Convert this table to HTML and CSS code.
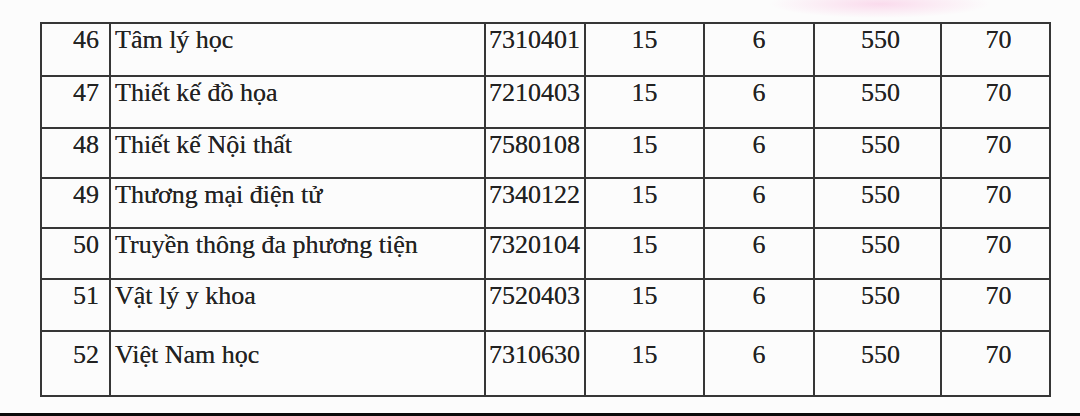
FILE: index.html
```html
<!DOCTYPE html>
<html lang="vi">
<head>
<meta charset="utf-8">
<link rel="stylesheet" href="styles.css">
</head>
<body>
<div class="sheet">
  <table class="grid">
    <colgroup>
      <col class="c-no"><col class="c-name"><col class="c-code"><col class="c-a"><col class="c-b"><col class="c-c"><col class="c-d">
    </colgroup>
    <tbody>
      <tr class="r1"><td class="no">46</td><td class="name">Tâm lý học</td><td class="code">7310401</td><td class="num">15</td><td class="num">6</td><td class="num n550">550</td><td class="num n70">70</td></tr>
      <tr class="r2"><td class="no">47</td><td class="name">Thiết kế đồ họa</td><td class="code">7210403</td><td class="num">15</td><td class="num">6</td><td class="num n550">550</td><td class="num n70">70</td></tr>
      <tr class="r3"><td class="no">48</td><td class="name">Thiết kế Nội thất</td><td class="code">7580108</td><td class="num">15</td><td class="num">6</td><td class="num n550">550</td><td class="num n70">70</td></tr>
      <tr class="r4"><td class="no">49</td><td class="name">Thương mại điện tử</td><td class="code">7340122</td><td class="num">15</td><td class="num">6</td><td class="num n550">550</td><td class="num n70">70</td></tr>
      <tr class="r5"><td class="no">50</td><td class="name">Truyền thông đa phương tiện</td><td class="code">7320104</td><td class="num">15</td><td class="num">6</td><td class="num n550">550</td><td class="num n70">70</td></tr>
      <tr class="r6"><td class="no">51</td><td class="name">Vật lý y khoa</td><td class="code">7520403</td><td class="num">15</td><td class="num">6</td><td class="num n550">550</td><td class="num n70">70</td></tr>
      <tr class="r7 last"><td class="no">52</td><td class="name">Việt Nam học</td><td class="code">7310630</td><td class="num">15</td><td class="num">6</td><td class="num n550">550</td><td class="num n70">70</td></tr>
    </tbody>
  </table>
</div>
<div class="edge"></div>
</body>
</html>
```

FILE: styles.css
```css
html, body {
  margin: 0;
  padding: 0;
}
body {
  width: 1080px;
  height: 416px;
  overflow: hidden;
  background:
    radial-gradient(ellipse 110px 14px at 880px 4px, rgba(250, 215, 235, 0.9), rgba(250, 225, 240, 0) 100%),
    #fcfcfc;
  color: #222222;
}
.sheet {
  padding: 22px 0 0 40px;
}
.grid {
  border-collapse: collapse;
  table-layout: fixed;
  width: 1009px;
  font-family: "Liberation Serif", "DejaVu Serif", serif;
  font-size: 26px;
  line-height: 28px;
  text-shadow: 0 0 0.5px rgba(20, 20, 20, 0.7);
}
.c-no { width: 69px; }
.c-name { width: 375px; }
.c-code { width: 100px; }
.c-a { width: 119px; }
.c-b { width: 110px; }
.c-c { width: 127px; }
.c-d { width: 109px; }
.grid td {
  border: 2px solid #363636;
  vertical-align: top;
  padding: 2px 4px 0;
  white-space: nowrap;
  overflow: hidden;
}
.r1 { height: 53px; }
.r2 { height: 52px; }
.r3 { height: 50px; }
.r4 { height: 50px; }
.r5 { height: 51px; }
.r6 { height: 52px; }
.r7 { height: 65px; }
.grid tr.last td { padding-top: 9px; }
.grid td.no {
  text-align: right;
  padding-right: 10px;
}
.grid td.name {
  padding-left: 4px;
}
.grid td.code {
  padding-left: 3px;
}
.grid td.num {
  text-align: center;
}
.grid td.n550 { padding-left: 10px; }
.grid td.n70 { padding-left: 10px; }
.edge {
  height: 4px;
  margin-top: 16px;
  background: #0a0a0a;
}
```
